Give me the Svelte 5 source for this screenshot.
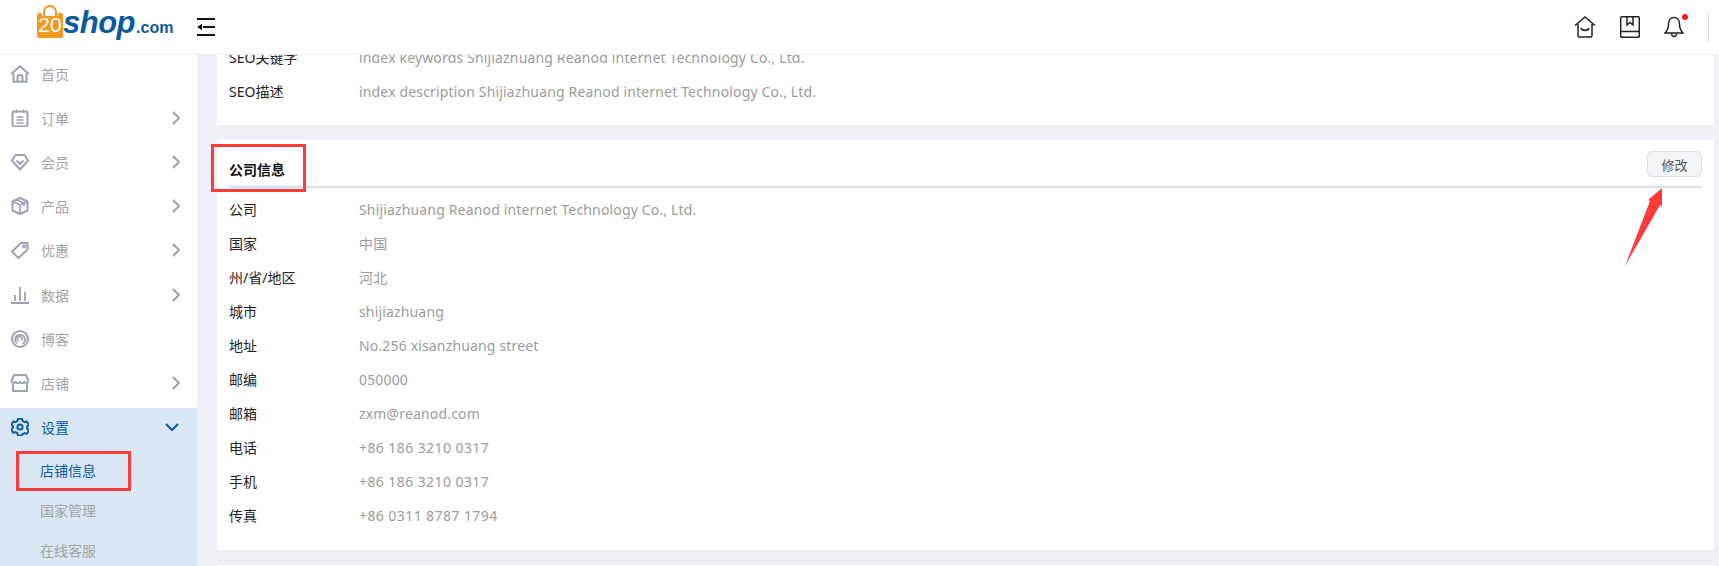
<script>
  const menu = [
    { key: 'home', label: '首页' },
    { key: 'order', label: '订单', arrow: true },
    { key: 'member', label: '会员', arrow: true },
    { key: 'product', label: '产品', arrow: true },
    { key: 'coupon', label: '优惠', arrow: true },
    { key: 'data', label: '数据', arrow: true },
    { key: 'blog', label: '博客' },
    { key: 'store', label: '店铺', arrow: true },
  ];
  const sub = ['店铺信息', '国家管理', '在线客服'];
  const seo = [
    ['SEO关键字', 'index keywords Shijiazhuang Reanod internet Technology Co., Ltd.'],
    ['SEO描述', 'index description Shijiazhuang Reanod internet Technology Co., Ltd.'],
  ];
  const company = [
    ['公司', 'Shijiazhuang Reanod internet Technology Co., Ltd.'],
    ['国家', '中国'],
    ['州/省/地区', '河北'],
    ['城市', 'shijiazhuang'],
    ['地址', 'No.256 xisanzhuang street'],
    ['邮编', '050000'],
    ['邮箱', 'zxm@reanod.com'],
    ['电话', '+86 186 3210 0317'],
    ['手机', '+86 186 3210 0317'],
    ['传真', '+86 0311 8787 1794'],
  ];
</script>

<div class="page">
  <header class="topbar">
    <div class="logo">
      <span class="bag">
        <svg viewBox="0 0 26 33" width="26" height="33">
          <path d="M7 12V7a6 6 0 0 1 12 0v5" fill="none" stroke="#f39a1e" stroke-width="2"/>
          <path d="M2 8h3v3h16V8h3a2 2 0 0 1 2 2v21a2 2 0 0 1-2 2H2a2 2 0 0 1-2-2V10a2 2 0 0 1 2-2z" fill="#f39a1e"/>
        </svg>
        <span class="bag-num">20</span>
      </span>
      <span class="shop">shop</span><span class="dotcom">.com</span>
    </div>
    <svg class="toggle" viewBox="0 0 18 18" width="18" height="18">
      <path d="M0 1h18M6 9h12M0 17h18" stroke="#111" stroke-width="2" fill="none"/>
      <path d="M0 9l5-3.200v6.400z" fill="#111"/>
    </svg>
    <div class="tools">
      <svg viewBox="0 0 22 22" width="22" height="22" fill="none" stroke="#222" stroke-width="1.500">
        <path d="M1 9.500 11 1l10 8.500M4 8v11.500a1.500 1.500 0 0 0 1.500 1.500h11a1.500 1.500 0 0 0 1.500-1.500V8"/>
        <path d="M7 12c1 3.200 7 3.200 8 0" stroke-width="1.700"/>
      </svg>
      <svg viewBox="0 0 20 22" width="20" height="22" fill="none" stroke="#222" stroke-width="1.500">
        <rect x="0.700" y="0.700" width="18.600" height="20.600" rx="1.500"/>
        <path d="M1 15.500h18M7 1v8l3-2.500L13 9V1"/>
      </svg>
      <div class="bell">
        <svg viewBox="0 0 20 22" width="20" height="22" fill="none" stroke="#222" stroke-width="1.500">
          <path d="M10 1.500c-3.500 0-5.500 3-5.500 6.500 0 4.500-1 6.500-3.500 9h18c-2.500-2.500-3.500-4.500-3.500-9 0-3.500-2-6.500-5.500-6.500z"/>
          <path d="M7.500 17.500c.3 4 4.700 4 5 0"/>
        </svg>
        <i class="dot"></i>
      </div>
      <span class="sep"></span>
    </div>
  </header>

  <div class="body">
    <aside class="side">
      {#each menu as m}
        <div class="item">
          <svg class="ico" viewBox="0 0 18 18" width="18" height="18" fill="none" stroke="#9aa2b6" stroke-width="2" stroke-linejoin="round">
            {#if m.key === 'home'}
              <path d="M.8 8.500 9 1.300l8.200 7.200-1.700 1V16.800h-13V9.500z"/><path d="M6.500 16.500v-4a2.500 2.500 0 0 1 5 0v4"/>
            {:else if m.key === 'order'}
              <rect x="1.500" y="2.500" width="15" height="15" rx="1.500"/><path d="M5.500 .5v3.500M12.500 .5v3.500M5.500 8h7M5.500 11h7M5.500 14h7" stroke-width="1.700"/>
            {:else if m.key === 'member'}
              <path d="M4.500 2h9L17 7.500 9 16.500 1 7.500z"/><path d="M5.500 7.500 9 11l3.500-3.500"/>
            {:else if m.key === 'product'}
              <path d="M9 1l7.500 3.500v9L9 17l-7.500-3.500v-9z"/><path d="M1.500 4.500 9 8l7.500-3.500M9 8v9M5.500 2.700l7.500 3.500v3" stroke-width="1.700"/>
            {:else if m.key === 'coupon'}
              <path d="M10 2h6.500v6.500L7.500 17 1 10.500z"/><circle cx="13" cy="5.500" r="1.300" stroke-width="1.500"/>
            {:else if m.key === 'data'}
              <path d="M0 17h18M4 15V9M9 15V1M14 15V6" stroke-width="1.800"/>
            {:else if m.key === 'blog'}
              <circle cx="9" cy="9" r="8"/><path d="M6 13.500a5 5 0 1 1 5.500 .5M7.500 11a2.500 2.500 0 1 1 3-.5" stroke-width="1.700"/>
            {:else}
              <path d="M3 1h12l2.500 6c0 2-3 2.800-4.200.8-1 2-3.500 2-4.300 0-1 2-3.500 2-4.500 0C3.500 9.800.5 9 .5 7z"/><path d="M2 10v7h14v-7"/>
            {/if}
          </svg>
          <span>{m.label}</span>
          {#if m.arrow}
            <svg class="chev" viewBox="0 0 8 14" width="8" height="14" fill="none" stroke="#9aa2b6" stroke-width="2.200"><path d="M1 1l6 6-6 6"/></svg>
          {/if}
        </div>
      {/each}
      <div class="group">
        <div class="item on">
          <svg class="ico" viewBox="0 0 18 18" width="18" height="18" fill="none" stroke="#0a5cab" stroke-width="2" stroke-linejoin="round">
            <path d="M7 1h4l.6 2.300 1.900 1.100 2.300-.7 2 3.400-1.700 1.700v2.200l1.700 1.700-2 3.400-2.300-.7-1.900 1.100L11 17.700H7l-.6-2.200-1.900-1.100-2.300.7-2-3.400 1.700-1.700V8.800L.2 7.100l2-3.400 2.300.7 1.900-1.100z" transform="translate(0 -.3)"/>
            <circle cx="9" cy="9" r="2.600"/>
          </svg>
          <span>设置</span>
          <svg class="chev down" viewBox="0 0 14 8" width="14" height="8" fill="none" stroke="#0a5cab" stroke-width="2.200"><path d="M1 1l6 6 6-6"/></svg>
        </div>
        <div class="subs">
          {#each sub as s, i}
            <div class="subitem" class:cur={i === 0}>{s}</div>
          {/each}
        </div>
      </div>
    </aside>

    <main class="content">
      <section class="card first">
        {#each seo as r}
          <div class="row"><span class="k">{r[0]}</span><span class="v">{r[1]}</span></div>
        {/each}
      </section>
      <section class="card">
        <div class="head">
          <b>公司信息</b>
          <button type="button">修改</button>
        </div>
        <div class="rows">
          {#each company as r}
            <div class="row"><span class="k">{r[0]}</span><span class="v" class:tel={r[1][0] === '+'}>{r[1]}</span></div>
          {/each}
        </div>
      </section>
      <section class="card last"></section>
    </main>
  </div>

  <!-- red annotations drawn over the screenshot -->
  <i class="mark mark-title"></i>
  <i class="mark mark-sub"></i>
  <svg class="arrow" viewBox="0 0 40 80" width="40" height="80">
    <path d="M0 79 25 14 23 13 37 1 37 20 35 18Z" fill="#ff3a3a"/>
  </svg>
</div>

<style>
  :global(body) {
    margin: 0;
    background: #eef0f5;
    overflow: hidden;
  }

  .page {
    position: relative;
    height: 566px;
    overflow: hidden;
    font-family: 'Noto Sans', 'Noto Sans CJK SC', sans-serif;
    font-size: 14px;
  }

  .topbar {
    position: relative;
    z-index: 2;
    display: flex;
    align-items: center;
    height: 54px;
    background: #fff;
    border-bottom: 1px solid #eceef4;
  }

  .logo {
    display: flex;
    align-items: baseline;
    align-self: flex-start;
    box-sizing: border-box;
    width: 160px;
    margin-left: 37px;
    padding-top: 5px;
    color: #0a5a9e;
    font-family: 'Liberation Sans', sans-serif;
    font-weight: 700;
    white-space: nowrap;
  }

  .bag {
    position: relative;
    align-self: flex-start;
    flex: none;
    display: flex;
    width: 26px;
    height: 33px;
  }

  .bag-num {
    position: absolute;
    left: 1px;
    right: 1px;
    bottom: 3px;
    font-size: 21px;
    font-weight: 400;
    line-height: 21px;
    text-align: center;
    color: #fff;
  }

  .shop {
    font-size: 31px;
    font-style: italic;
    letter-spacing: -0.5px;
    line-height: 36px;
  }

  .dotcom {
    font-size: 16px;
    margin-left: 1px;
  }

  .toggle {
    flex: none;
  }

  .tools {
    margin-left: auto;
    display: flex;
    align-items: center;
    gap: 24px;
    padding-right: 10px;
  }

  .bell {
    position: relative;
    display: flex;
  }

  .dot {
    position: absolute;
    right: -4px;
    top: -2px;
    width: 6px;
    height: 6px;
    border-radius: 50%;
    background: #f01f1f;
  }

  .sep {
    width: 1px;
    height: 30px;
    background: #dcdcdc;
  }

  .body {
    display: flex;
    align-items: flex-start;
    margin-top: -3px;
  }

  .side {
    flex: none;
    width: 197px;
    height: 520px;
    background: #fff;
    color: #a3a3a3;
  }

  .item {
    display: flex;
    align-items: center;
    height: 44.100px;
    padding-left: 11px;
  }

  .ico {
    flex: none;
    margin-right: 12px;
  }

  .chev {
    margin-left: auto;
    margin-right: 17px;
  }

  .chev.down {
    margin-right: 18px;
  }

  .group {
    margin-top: 3px;
    background: #d9e6f3;
    padding-bottom: 40px;
  }

  .item.on {
    height: 38px;
    color: #0a5cab;
  }

  .subs {
    padding-top: 6px;
  }

  .subitem {
    height: 40px;
    line-height: 38px;
    padding-left: 40px;
    color: #a3a3a3;
  }

  .subitem.cur {
    color: #0a5cab;
  }

  .content {
    flex: 1;
    min-width: 0;
    padding: 0 5px 0 20px;
    margin-top: -12px;
  }

  .card {
    background: #fff;
    margin-bottom: 15px;
    padding: 0 12px;
  }

  .card.first {
    padding-bottom: 17px;
  }

  .row {
    display: flex;
    align-items: center;
    height: 34px;
    color: #222;
    white-space: nowrap;
  }

  .k {
    width: 130px;
    flex: none;
  }

  .v {
    color: #9b9b9b;
    letter-spacing: 0.16px;
  }

  .v.tel {
    letter-spacing: 0.42px;
  }

  .head {
    display: flex;
    align-items: flex-start;
    justify-content: space-between;
    height: 48px;
    box-sizing: border-box;
    border-bottom: 2px solid #dedede;
    color: #111;
  }

  .head b {
    margin-top: 20px;
    font-size: 14px;
    line-height: 20px;
  }

  .head button {
    width: 55px;
    height: 26px;
    margin-top: 11px;
    padding: 0;
    font: inherit;
    font-size: 13px;
    color: #555;
    background: #f3f4f8;
    border: 1.5px solid #dfe0e4;
    border-radius: 5px;
  }

  .rows {
    padding: 4px 0 18px;
  }

  .card.last {
    height: 40px;
    margin-bottom: 0;
  }

  .mark {
    position: absolute;
    z-index: 3;
    box-sizing: border-box;
    border: 3px solid #ff3a3a;
  }

  .mark-title {
    left: 211px;
    top: 144px;
    width: 95px;
    height: 48px;
  }

  .mark-sub {
    left: 16px;
    top: 451px;
    width: 115px;
    height: 40px;
  }

  .arrow {
    position: absolute;
    z-index: 3;
    left: 1625px;
    top: 187px;
  }
</style>
